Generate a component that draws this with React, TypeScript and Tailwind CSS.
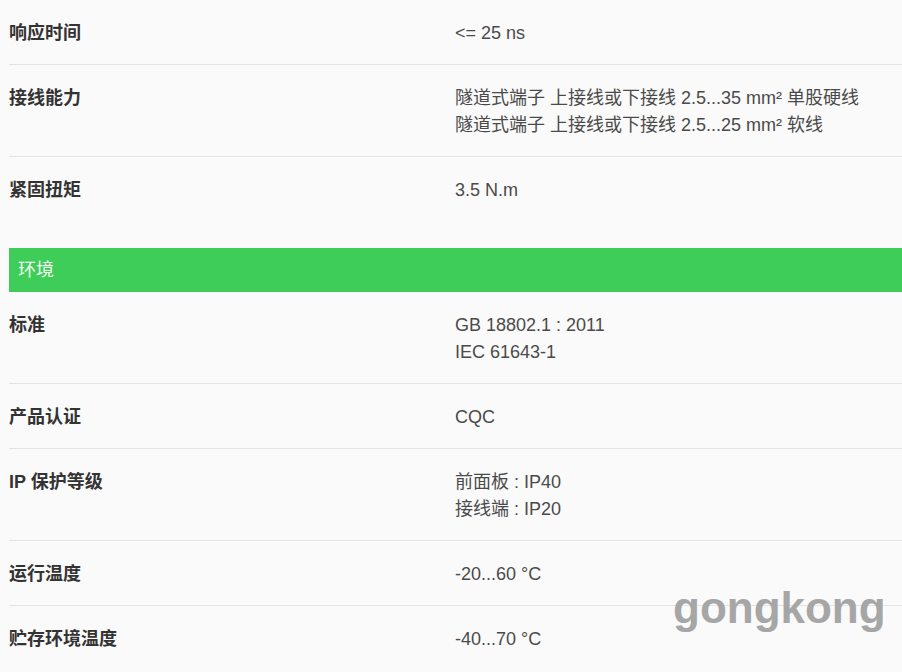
const font = "font-['Liberation_Sans','Noto_Sans_CJK_SC',sans-serif]";

type Spec = { label: string; values: string[]; last?: boolean };

const top: Spec[] = [
  { label: "响应时间", values: ["<= 25 ns"] },
  {
    label: "接线能力",
    values: [
      "隧道式端子 上接线或下接线 2.5...35 mm² 单股硬线",
      "隧道式端子 上接线或下接线 2.5...25 mm² 软线",
    ],
  },
  { label: "紧固扭矩", values: ["3.5 N.m"], last: true },
];

const env: Spec[] = [
  { label: "标准", values: ["GB 18802.1 : 2011", "IEC 61643-1"] },
  { label: "产品认证", values: ["CQC"] },
  { label: "IP 保护等级", values: ["前面板 : IP40", "接线端 : IP20"] },
  { label: "运行温度", values: ["-20...60 °C"] },
  { label: "贮存环境温度", values: ["-40...70 °C"], last: true },
];

function Row({ label, values, last }: Spec) {
  return (
    <div
      className={
        last
          ? "flex pt-[20px] pb-[17px]"
          : "flex pt-[20px] pb-[17px] border-b border-[#e4e4e4]"
      }
    >
      <div className="w-[446px] shrink-0 text-[18px] leading-[27px] font-bold text-[#333333]">
        {label}
      </div>
      <div className="flex flex-col text-[18px] leading-[27px] text-[#4a4a4a]">
        {values.map((v) => (
          <p key={v}>{v}</p>
        ))}
      </div>
    </div>
  );
}

export default function App() {
  return (
    <div className={`relative w-[902px] h-[672px] overflow-hidden bg-[#fafafa] pl-[9px] ${font}`}>
      {top.map((r) => (
        <Row key={r.label} {...r} />
      ))}
      <div className="mt-[27px] h-[44px] bg-[#3dcd58] flex items-center pl-[9px] text-[18px] text-[#f4fff4]">
        环境
      </div>
      {env.map((r) => (
        <Row key={r.label} {...r} />
      ))}
      <div className="absolute left-[673px] top-[586px] text-[44px] leading-none font-bold text-[#a6a6a6] font-['Liberation_Sans',sans-serif]">
        gongkong
      </div>
    </div>
  );
}
